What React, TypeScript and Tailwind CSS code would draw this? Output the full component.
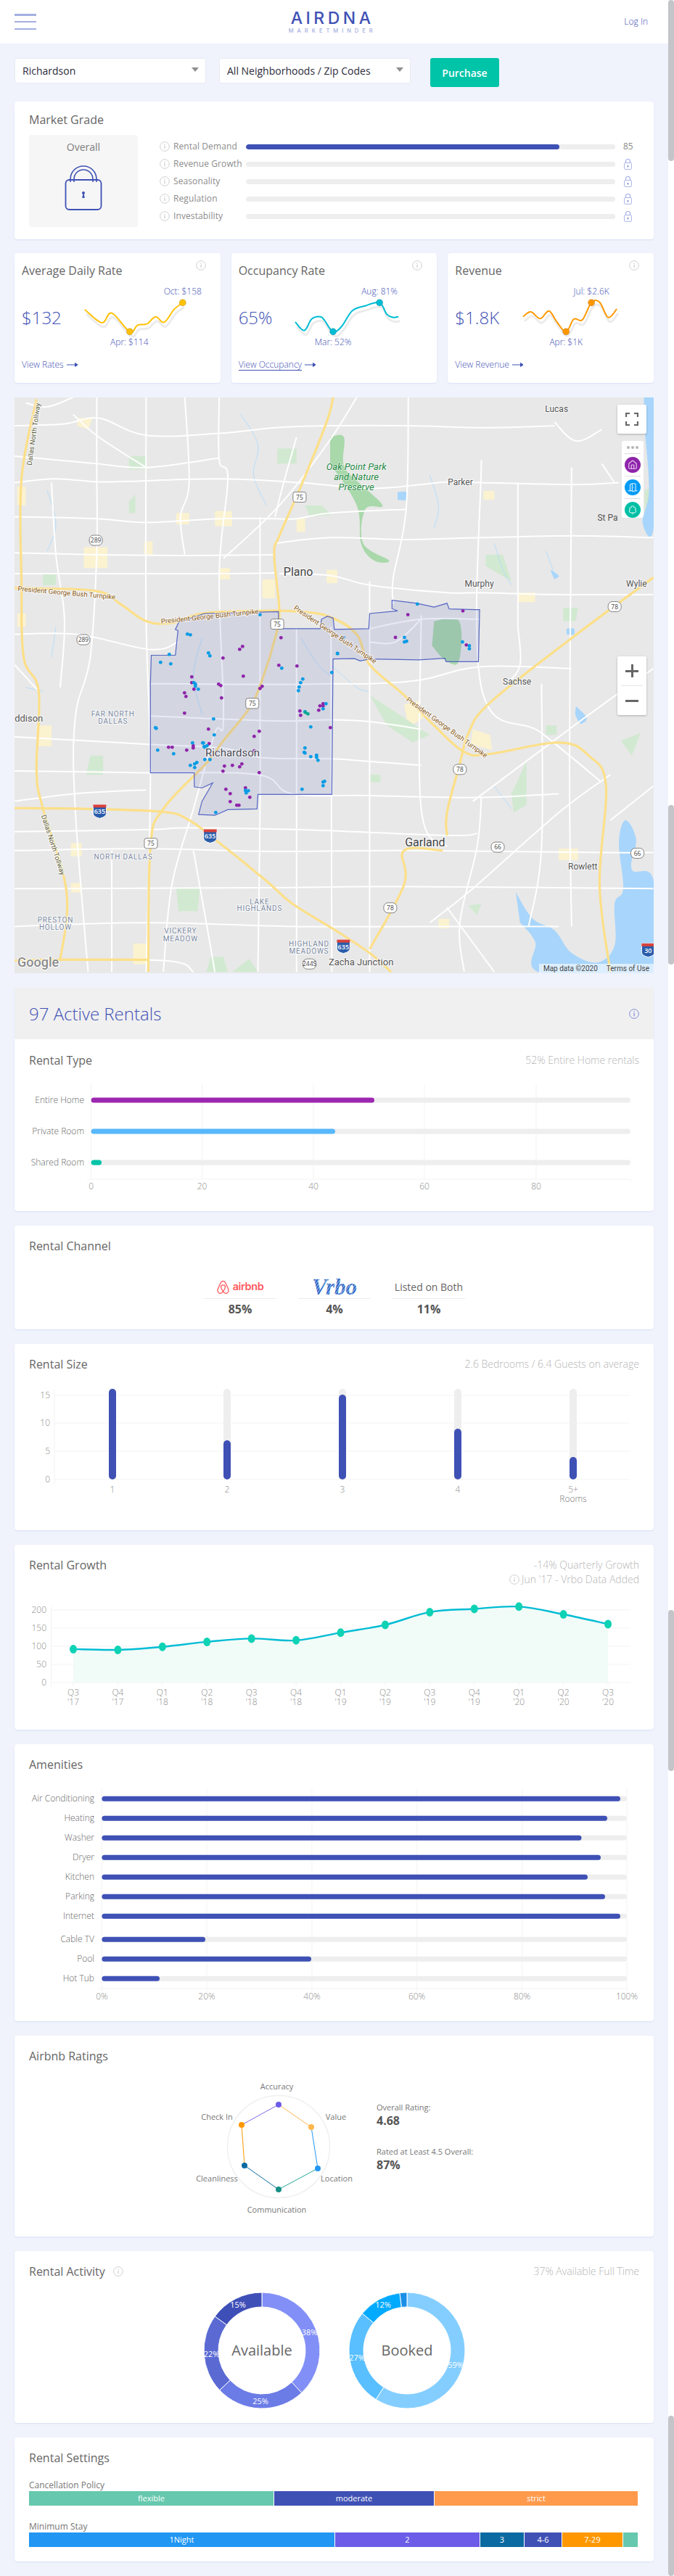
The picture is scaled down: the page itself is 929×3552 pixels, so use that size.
import React from "react";
import { House, DoorOpen, TreeDeciduous } from "lucide-react";

type P = [number, number];

// Smooth path through points (Catmull-Rom → Bezier)
function smooth(p: P[], t = 0.18): string {
  let d = `M${p[0][0]} ${p[0][1]}`;
  for (let i = 0; i < p.length - 1; i++) {
    const a = p[Math.max(i - 1, 0)], b = p[i], c = p[i + 1], e = p[Math.min(i + 2, p.length - 1)];
    d += ` C${b[0] + (c[0] - a[0]) * t} ${b[1] + (c[1] - a[1]) * t} ${c[0] - (e[0] - b[0]) * t} ${c[1] - (e[1] - b[1]) * t} ${c[0]} ${c[1]}`;
  }
  return d;
}

const Info = ({ color = "#cfcfcf", size = 14 }: { color?: string; size?: number }) => (
  <svg width={size} height={size} viewBox="0 0 14 14" className="shrink-0">
    <circle cx="7" cy="7" r="6.3" fill="none" stroke={color} strokeWidth="1" />
    <rect x="6.4" y="6" width="1.3" height="4.2" fill={color} />
    <rect x="6.4" y="3.7" width="1.3" height="1.4" fill={color} />
  </svg>
);

const SmallLock = () => (
  <svg width="11" height="15" viewBox="0 0 11 15" className="ml-[1px]">
    <path d="M2.5 6V3.5a3 3 0 0 1 6 0V6" fill="none" stroke="#a9b3e6" strokeWidth="1.2" />
    <rect x="0.6" y="5.6" width="9.8" height="8.8" rx="1" fill="none" stroke="#a9b3e6" strokeWidth="1" />
    <rect x="5" y="9" width="1" height="2.5" fill="#3f51b5" />
  </svg>
);

const gradeRows = [
  { label: "Rental Demand", value: true },
  { label: "Revenue Growth" },
  { label: "Seasonality" },
  { label: "Regulation" },
  { label: "Investability" },
];

function MarketGrade() {
  return (
    <section className="mt-5 h-[190px] rounded-[4px] bg-white px-5 pt-[13px] shadow-[0_1px_2px_#d9dff5]">
      <h2 className="text-[16px] leading-6 text-[#666666]">Market Grade</h2>
      <div className="mt-[9px] flex">
        <div className="flex h-[127px] w-[150px] flex-col items-center rounded-[4px] bg-[#f6f6f6] pt-[7px]">
          <span className="text-[14px] leading-5 text-[#7d7d7d]">Overall</span>
          <svg width="52" height="66" viewBox="0 0 52 66" className="mt-[12px]">
            <path d="M8 26V22a18 18 0 0 1 36 0v4" fill="none" stroke="#3f51b5" strokeWidth="1.6" />
            <path d="M13 26V22a13 13 0 0 1 26 0v4" fill="none" stroke="#3f51b5" strokeWidth="1.6" />
            <rect x="1.5" y="23" width="49" height="41" rx="5" fill="none" stroke="#3f51b5" strokeWidth="1.8" />
            <circle cx="26" cy="41" r="2" fill="#3f51b5" />
            <path d="M25.4 42h1.2l1.2 6h-3.6z" fill="#3f51b5" />
          </svg>
        </div>
        <div className="ml-[30px] mt-[4px] flex flex-col">
          {gradeRows.map((r) => (
            <div key={r.label} className="flex h-6 items-center">
              <Info />
              <span className="ml-[5px] w-[100px] text-[12px] tracking-[0.1px] text-[#8c8c8c]">{r.label}</span>
              <div className="h-[7px] w-[509px] overflow-hidden rounded-full bg-[#eeeeee]">
                {r.value && <div className="h-full w-[432px] rounded-full bg-[#3f51b5]" />}
              </div>
              <div className="ml-[11px] w-[20px] text-[12px] text-[#888888]">{r.value ? "85" : <SmallLock />}</div>
            </div>
          ))}
        </div>
      </div>
    </section>
  );
}

type Spark = {
  title: string; value: string; color: string; cardX: number; link: string; underline?: boolean;
  pts: P[]; dots: P[]; hi: [string, number]; lo: [string, number];
};
const sparks: Spark[] = [
  {
    title: "Average Daily Rate", value: "$132", color: "#ffc107", cardX: 20, link: "View Rates",
    pts: [[197, 290], [237, 345], [260, 305], [302, 382], [320, 355], [342, 350], [362, 320], [382, 343], [405, 290], [425, 262]],
    dots: [[302, 382], [425, 262]], hi: ["Oct: $158", 425], lo: ["Apr: $114", 301],
  },
  {
    title: "Occupancy Rate", value: "65%", color: "#00bcd4", cardX: 319, link: "View Occupancy", underline: true,
    pts: [[687, 342], [708, 377], [725, 330], [745, 320], [755, 335], [775, 382], [795, 360], [820, 295], [850, 275], [883, 262], [900, 310], [915, 323], [927, 320]],
    dots: [[775, 382], [883, 262]], hi: ["Aug: 81%", 883], lo: ["Mar: 52%", 775],
  },
  {
    title: "Revenue", value: "$1.8K", color: "#ff9800", cardX: 617, link: "View Revenue",
    pts: [[1217, 320], [1235, 300], [1257, 328], [1277, 296], [1295, 340], [1317, 382], [1335, 330], [1355, 333], [1376, 262], [1395, 260], [1415, 323], [1435, 288]],
    dots: [[1317, 382], [1376, 262]], hi: ["Jul: $2.6K", 1376], lo: ["Apr: $1K", 1317],
  },
];

function SparkCard({ s }: { s: Spark }) {
  const X = (z: number) => z / 1.688 - s.cardX - 80;
  const Y = (z: number) => z / 3 + 330 - 395;
  const pts = s.pts.map(([x, y]) => [X(x), Y(y)] as P);
  return (
    <section className="relative h-[179px] rounded-[4px] bg-white px-[10px] pt-[12px] shadow-[0_1px_2px_#d9dff5]">
      <h3 className="text-[16px] leading-6 text-[#666666]">{s.title}</h3>
      <div className="absolute right-[20px] top-[10px]"><Info /></div>
      <div className="mt-[10px] flex h-[85px] items-center">
        <div className="w-[70px] text-[24px] font-light text-[#3f51b5]">{s.value}</div>
        <svg width="185" height="85" className="overflow-visible">
          <path d={smooth(pts)} fill="none" stroke="#000" strokeOpacity="0.08" strokeWidth="3" transform="translate(2 6)" />
          <path d={smooth(pts)} fill="none" stroke={s.color} strokeWidth="2" />
          {s.dots.map(([x, y]) => (
            <circle key={x} cx={X(x)} cy={Y(y)} r="4.6" fill={s.color} stroke="#000" strokeOpacity="0.15" strokeWidth="1" />
          ))}
          <text x={X(s.hi[1])} y={Y(215) + 4} textAnchor="middle" fontSize="12" fill="#3f51b5" fontWeight="300">{s.hi[0]}</text>
          <text x={X(s.lo[1])} y={Y(425) + 4} textAnchor="middle" fontSize="12" fill="#3f51b5" fontWeight="300">{s.lo[0]}</text>
        </svg>
      </div>
      <div className="mt-[15px] flex h-4 items-center text-[12px] font-light text-[#3f51b5]">
        <span className={s.underline ? "border-b border-[#3f51b5] leading-[15px]" : ""}>{s.link}</span>
        <svg width="16" height="8" viewBox="0 0 16 8" className="ml-[4px]">
          <path d="M0 4h14M11.5 1.5 15 4l-3.5 2.5z" stroke="#3f51b5" strokeWidth="1" fill="#3f51b5" />
        </svg>
      </div>
    </section>
  );
}

/* ---------- MAP ---------- */
const mx = (z: number) => z / 1.688 - 20;
const my = (z: number) => z / 1.912 - 8;
const line = (a: number[]) => {
  let s = "";
  for (let i = 0; i < a.length; i += 2) s += `${i ? "L" : "M"}${mx(a[i]).toFixed(1)} ${my(a[i + 1]).toFixed(1)} `;
  return s;
};
const curve = (a: number[]) => {
  const p: P[] = [];
  for (let i = 0; i < a.length; i += 2) p.push([mx(a[i]), my(a[i + 1])]);
  return smooth(p);
};

const whiteRoads: number[][] = [
  [34, 90, 150, 85, 230, 70, 340, 115, 510, 110, 640, 95, 760, 90, 950, 90, 1130, 95, 1290, 90],
  [34, 240, 130, 230, 230, 238, 340, 235, 520, 230, 700, 240, 870, 255, 1040, 238, 1120, 240, 1330, 245, 1440, 240],
  [34, 330, 225, 335, 340, 345, 510, 335, 640, 335, 690, 335, 770, 320, 945, 310],
  [640, 400, 770, 385, 945, 390, 1120, 385, 1330, 380, 1520, 385],
  [34, 425, 225, 430, 430, 432, 640, 430],
  [34, 480, 340, 480, 510, 480, 640, 478],
  [650, 480, 770, 485, 860, 510, 1040, 530, 1120, 530, 1290, 535, 1520, 535],
  [34, 640, 180, 640, 350, 680, 415, 660],
  [350, 770, 640, 772, 770, 770, 860, 770, 980, 760, 1120, 725, 1330, 730],
  [350, 855, 640, 868, 770, 865, 860, 870, 980, 890],
  [34, 910, 350, 930, 520, 940, 610, 965, 770, 968, 860, 975, 980, 985],
  [34, 1000, 350, 1005, 600, 1010, 680, 1060, 860, 1065, 1110, 1070, 1300, 1060],
  [34, 1160, 340, 1155, 440, 1150, 700, 1155, 1040, 1170, 1110, 1165],
  [34, 1210, 340, 1205, 620, 1212, 940, 1210, 1400, 1215, 1520, 1215],
  [34, 1310, 160, 1310, 620, 1308, 940, 1305, 1520, 1310],
  [34, 1410, 340, 1400, 680, 1410, 1000, 1410, 1300, 1410],
  [34, 1500, 380, 1500, 450, 1530],
  [860, 625, 980, 600, 1116, 600],
  [860, 660, 920, 660, 980, 600],
  [225, 15, 225, 200, 225, 430, 210, 700, 175, 860, 175, 1100, 205, 1530],
  [340, 15, 340, 600, 350, 1000, 340, 1530],
  [510, 15, 510, 180, 530, 230, 510, 480, 520, 860, 500, 900, 450, 1100, 400, 1300, 380, 1530],
  [605, 330, 605, 780, 605, 1100, 600, 1530],
  [690, 625, 690, 1530],
  [770, 620, 772, 1530],
  [860, 500, 860, 1530],
  [950, 15, 945, 310, 915, 490, 915, 560],
  [980, 590, 980, 1100, 1040, 1200],
  [1120, 180, 1120, 780, 1260, 900, 1400, 1030],
  [1205, 240, 1205, 620],
  [1330, 200, 1325, 1000, 1330, 1410],
  [1520, 730, 1360, 860, 1100, 1080],
  [1000, 1400, 1100, 1310, 1300, 1110, 1420, 1010],
  [1040, 1360, 1150, 1530],
  [830, 15, 760, 140, 650, 300, 520, 440],
  [34, 720, 90, 790],
  [170, 60, 230, 120, 340, 200],
  [1520, 1040, 1420, 1130],
  [1290, 80, 1340, 130, 1400, 100],
  [1400, 190, 1430, 240],
  [34, 170, 130, 180, 225, 190, 340, 200, 510, 175],
  [430, 15, 440, 240, 420, 330, 430, 430],
  [120, 240, 130, 430, 150, 600, 140, 780],
  [60, 30, 110, 40, 170, 15],
  [1120, 1070, 1110, 1200, 1070, 1400, 1080, 1530],
  [1260, 770, 1260, 1200, 1230, 1410],
  [690, 120, 660, 240, 640, 330],
  [34, 1080, 175, 1060, 340, 1050],
  [260, 1210, 260, 1530],
  [450, 1210, 480, 1400, 500, 1530],
  [1205, 620, 1210, 720, 1180, 770],
];
const yellowRoads: number[][] = [
  [775, 15, 760, 80, 700, 250, 650, 380, 638, 430, 650, 580, 640, 650, 610, 760, 580, 835, 520, 920, 480, 980, 380, 1100, 350, 1200, 345, 1530],
  [85, 20, 50, 230, 50, 500, 55, 700, 90, 790, 85, 1000, 100, 1100, 155, 1320, 140, 1500],
  [34, 518, 220, 525, 280, 560, 340, 605, 400, 610, 470, 585, 600, 578, 700, 580, 770, 595, 830, 640, 860, 720, 940, 800, 1010, 880, 1080, 950, 1140, 955, 1300, 925, 1370, 960, 1410, 1040, 1395, 1300, 1420, 1530],
  [34, 1098, 200, 1100, 380, 1108, 440, 1130, 500, 1180, 620, 1290, 680, 1350, 780, 1420, 860, 1480, 910, 1530],
  [1520, 490, 1330, 650, 1140, 820, 1090, 900, 1070, 980, 1040, 1110, 1040, 1170],
  [1030, 1210, 940, 1210, 940, 1300, 860, 1470],
  [34, 1500, 140, 1498, 345, 1498],
];
const parks: number[][] = [
  [768, 120, 800, 120, 800, 195, 835, 240, 890, 300, 850, 310, 845, 400, 905, 445, 870, 445, 840, 400, 830, 300, 768, 190],
  [1010, 605, 1068, 605, 1068, 710, 1038, 710, 1005, 670],
];
const greens: number[][] = [
  [300, 170, 340, 170, 340, 205, 300, 205],
  [645, 150, 690, 150, 690, 190, 645, 190],
  [860, 800, 900, 830, 1000, 905, 960, 925, 900, 880],
  [1190, 1060, 1225, 975, 1225, 1090, 1195, 1110],
  [1445, 920, 1490, 900, 1470, 960],
  [1120, 1350, 1110, 1380, 1090, 1355],
  [410, 1310, 465, 1310, 460, 1370, 415, 1370],
  [540, 1530, 580, 1495, 600, 1530],
  [1310, 570, 1345, 570, 1340, 605, 1310, 605],
  [1130, 430, 1170, 430, 1190, 500, 1130, 460],
  [710, 300, 750, 300, 770, 325, 720, 330],
  [100, 480, 130, 480, 130, 510, 100, 510],
  [1270, 880, 1295, 880, 1295, 905, 1270, 905],
  [860, 1010, 885, 1010, 885, 1030, 860, 1030],
  [210, 960, 240, 960, 240, 1010, 200, 1010],
  [490, 1490, 520, 1490, 530, 1530, 480, 1530],
  [300, 290, 315, 270, 315, 320, 300, 320],
  [1500, 260, 1521, 250, 1521, 330, 1500, 320],
];
const yellows: number[][] = [
  [500, 315, 540, 315, 540, 355, 500, 355],
  [410, 320, 440, 320, 440, 350, 410, 350],
  [195, 410, 250, 410, 250, 465, 195, 465],
  [335, 395, 355, 395, 355, 430, 335, 430],
  [610, 495, 640, 495, 640, 545, 610, 545],
  [690, 335, 710, 335, 710, 370, 690, 370],
  [760, 470, 785, 470, 785, 505, 760, 505],
  [1205, 530, 1245, 530, 1245, 555, 1205, 555],
  [1125, 262, 1150, 262, 1150, 285, 1125, 285],
  [940, 825, 975, 815, 985, 860, 950, 885],
  [1100, 890, 1140, 905, 1145, 945, 1095, 930],
  [165, 1190, 190, 1190, 190, 1225, 165, 1225],
  [310, 1455, 345, 1455, 345, 1510, 310, 1510],
  [510, 465, 535, 465, 535, 495, 510, 495],
  [40, 250, 60, 250, 60, 300, 40, 300],
  [40, 585, 60, 585, 60, 620, 40, 620],
  [85, 880, 120, 880, 120, 935, 85, 935],
  [1300, 1205, 1345, 1205, 1345, 1235, 1300, 1235],
  [1020, 1390, 1045, 1390, 1045, 1415, 1020, 1415],
  [165, 1295, 190, 1295, 190, 1320, 165, 1320],
  [180, 70, 215, 70, 205, 100, 180, 90],
];
const waterPolys: number[][] = [
  [1200, 1320, 1240, 1390, 1290, 1420, 1330, 1480, 1390, 1505, 1430, 1460, 1430, 1350, 1450, 1310, 1440, 1190, 1455, 1130, 1480, 1180, 1470, 1260, 1521, 1290, 1521, 1533, 1260, 1533, 1245, 1450, 1210, 1400],
  [1498, 15, 1521, 15, 1521, 355, 1495, 345, 1510, 260, 1500, 100],
  [1340, 830, 1365, 860, 1350, 875, 1338, 850],
  [1280, 470, 1300, 485, 1290, 495],
  [1318, 625, 1335, 625, 1335, 640, 1318, 640],
  [925, 265, 945, 265, 945, 285, 925, 285],
];
const streams: number[][] = [
  [560, 60, 600, 140, 590, 220, 620, 300],
  [110, 260, 130, 350, 110, 420],
  [1000, 220, 1020, 300, 1010, 360],
  [1150, 400, 1170, 470, 1190, 510],
  [1270, 420, 1290, 480],
  [1150, 1040, 1190, 1100],
  [770, 720, 830, 780, 860, 790],
  [470, 650, 450, 750, 470, 850],
  [700, 650, 740, 720, 770, 750],
  [130, 620, 120, 700],
  [60, 780, 100, 790],
];

const polyMain = [352, 695, 408, 695, 414, 630, 408, 627, 416, 608, 475, 585, 648, 580, 648, 625, 745, 625, 748, 600, 762, 592, 775, 597, 778, 627, 858, 625, 860, 585, 925, 578, 912, 572, 912, 550, 970, 558, 1010, 568, 1040, 558, 1045, 573, 1107, 575, 1116, 575, 1113, 712, 1038, 712, 1035, 703, 975, 707, 860, 705, 838, 710, 825, 704, 775, 705, 772, 1062, 600, 1062, 598, 1100, 530, 1102, 500, 1117, 462, 1115, 470, 1080, 495, 1032, 470, 1045, 452, 1042, 452, 1005, 350, 1005, 350, 770];

const cp = (a: number) => 190 + a / 3 - 20;
const cq = (a: number) => 860 + a / 3 - 548;
const purple: P[] = [[592, 58], [433, 94], [421, 106], [352, 142], [583, 172], [658, 175], [436, 217], [223, 220], [223, 244], [334, 250], [343, 256], [514, 259], [505, 268], [232, 271], [193, 286], [199, 301], [346, 307], [193, 370], [670, 361], [673, 379], [748, 358], [753, 340], [766, 331], [766, 340], [481, 319], [475, 328], [490, 325], [469, 340], [481, 337], [292, 436], [502, 445], [481, 466], [796, 430], [295, 496], [229, 505], [229, 514], [127, 511], [142, 511], [202, 523], [481, 526], [358, 589], [391, 586], [430, 580], [421, 592], [352, 610], [502, 616], [364, 685], [445, 679], [382, 703], [463, 718], [382, 736], [409, 751], [418, 751]];
const blue: P[] = [[205, 43], [217, 46], [292, 121], [298, 133], [130, 127], [94, 160], [136, 166], [595, 184], [826, 124], [850, 58], [802, 202], [682, 229], [673, 244], [667, 262], [664, 277], [238, 250], [238, 259], [232, 244], [250, 271], [778, 331], [766, 352], [691, 364], [313, 394], [73, 430], [76, 433], [715, 427], [316, 460], [226, 493], [268, 493], [271, 493], [274, 508], [277, 511], [286, 505], [82, 523], [148, 538], [691, 514], [688, 532], [691, 535], [715, 550], [739, 544], [739, 553], [745, 565], [277, 562], [298, 562], [244, 574], [235, 580], [217, 586], [235, 595], [772, 652], [766, 655], [766, 670], [679, 685], [445, 690], [457, 691], [448, 700], [322, 781]];
const green: P[] = [[693, 367], [703, 373]];
const purpleZ: P[] = [[949, 588], [1077, 578], [920, 648], [1085, 668]];
const blueZ: P[] = [[971, 560], [799, 649], [785, 690], [941, 648], [941, 660], [946, 658], [1076, 660], [1092, 670], [1092, 678], [605, 588]];

type L = [string, number, number, number, string?, number?];
const mapLabels: L[] = [
  ["Plano", 694, 475, 16, "#444"],
  ["Richardson", 541, 951, 15, "#4a4a55"],
  ["Garland", 989, 1188, 16, "#444"],
  ["Murphy", 1115, 507, 12, "#555"],
  ["Parker", 1071, 239, 12, "#555"],
  ["Lucas", 1295, 46, 12, "#555"],
  ["Wylie", 1481, 507, 12, "#555"],
  ["Sachse", 1203, 765, 12, "#555"],
  ["Rowlett", 1356, 1251, 12, "#555"],
  ["Zacha Junction", 840, 1503, 13, "#555"],
  ["FAR NORTH", 263, 849, 10, "#7b8aa3"],
  ["DALLAS", 263, 868, 10, "#7b8aa3"],
  ["NORTH DALLAS", 287, 1227, 10, "#7b8aa3"],
  ["LAKE", 604, 1344, 10, "#7b8aa3"],
  ["HIGHLANDS", 604, 1363, 10, "#7b8aa3"],
  ["PRESTON", 129, 1393, 10, "#7b8aa3"],
  ["HOLLOW", 129, 1411, 10, "#7b8aa3"],
  ["VICKERY", 420, 1422, 10, "#7b8aa3"],
  ["MEADOW", 420, 1442, 10, "#7b8aa3"],
  ["HIGHLAND", 719, 1455, 10, "#7b8aa3"],
  ["MEADOWS", 719, 1474, 10, "#7b8aa3"],
  ["President George Bush Turnpike", 155, 530, 9.5, "#8a5a14", 5],
  ["President George Bush Turnpike", 488, 592, 9.5, "#8a5a14", -6],
  ["President George Bush Turnpike", 780, 640, 9.5, "#8a5a14", 34],
  ["President George Bush Turnpike", 1040, 885, 9.5, "#8a5a14", 36],
  ["Dallas North Tollway", 78, 112, 9.5, "#5c5c3c", -82],
  ["Dallas North Tollway", 124, 1195, 9.5, "#5c5c3c", 72],
];

const Shield = ({ z, label, kind }: { z: P; label: string; kind: "us" | "st" | "i" }) => {
  const x = mx(z[0]), y = my(z[1]);
  if (kind === "i")
    return (
      <g transform={`translate(${x} ${y})`}>
        <path d="M-9 -9h18v12q0 5 -9 7q-9 -2 -9 -7z" fill="#2a5caa" stroke="#fff" strokeWidth="1" />
        <path d="M-9 -9h18v4h-18z" fill="#d8423b" />
        <text y="4" textAnchor="middle" fontSize="9" fill="#fff" fontWeight="600">{label}</text>
      </g>
    );
  return (
    <g transform={`translate(${x} ${y})`}>
      <rect x="-9" y="-7" width="18" height="14" rx={kind === "us" ? 3 : 6} fill="#fff" stroke="#666" strokeWidth="0.8" />
      <text y="3.2" textAnchor="middle" fontSize="8.5" fill="#444">{label}</text>
    </g>
  );
};

function MapPanel() {
  return (
    <section className="relative mt-5 h-[794px] overflow-hidden bg-[#e8e8e8]">
      <svg width="881" height="794" className="block">
        {yellows.map((g, i) => <path key={i} d={line(g) + "Z"} fill="#fbf2d0" />)}
        {greens.map((g, i) => <path key={i} d={line(g) + "Z"} fill="#d2e9d1" />)}
        {parks.map((g, i) => <path key={i} d={curve(g) + "Z"} fill="#a9d8ab" />)}
        {streams.map((g, i) => <path key={i} d={curve(g)} fill="none" stroke="#aadaff" strokeWidth="0.8" />)}
        {waterPolys.map((g, i) => <path key={i} d={curve(g) + "Z"} fill="#a8d5fb" />)}
        {whiteRoads.map((g, i) => <path key={i} d={curve(g)} fill="none" stroke="#fff" strokeWidth="2" />)}
        {yellowRoads.map((g, i) => (
          <path key={i} d={curve(g)} fill="none" stroke="#fcdf88" strokeWidth="3.2" />
        ))}
        <path d={line(polyMain) + "Z"} fill="#3f51b5" fillOpacity="0.12" stroke="#5566c4" strokeWidth="1.2" />
        {purple.map(([a, b], i) => <circle key={i} cx={cp(a)} cy={cq(b)} r="2.4" fill="#8e24aa" />)}
        {blue.map(([a, b], i) => <circle key={i} cx={cp(a)} cy={cq(b)} r="2.4" fill="#039be5" />)}
        {green.map(([a, b], i) => <circle key={i} cx={cp(a)} cy={cq(b)} r="2.4" fill="#00a98f" />)}
        {purpleZ.map(([a, b], i) => <circle key={i} cx={mx(a)} cy={my(b)} r="2.4" fill="#8e24aa" />)}
        {blueZ.map(([a, b], i) => <circle key={i} cx={mx(a)} cy={my(b)} r="2.4" fill="#039be5" />)}
        <Shield z={[697, 278]} label="75" kind="us" />
        <Shield z={[645, 613]} label="75" kind="us" />
        <Shield z={[587, 822]} label="75" kind="us" />
        <Shield z={[351, 1191]} label="75" kind="us" />
        <Shield z={[223, 392]} label="289" kind="st" />
        <Shield z={[194, 654]} label="289" kind="st" />
        <Shield z={[1430, 567]} label="78" kind="st" />
        <Shield z={[1070, 996]} label="78" kind="st" />
        <Shield z={[908, 1361]} label="78" kind="st" />
        <Shield z={[1158, 1201]} label="66" kind="st" />
        <Shield z={[1483, 1217]} label="66" kind="st" />
        <Shield z={[720, 1509]} label="244S" kind="st" />
        <Shield z={[232, 1106]} label="635" kind="i" />
        <Shield z={[489, 1171]} label="635" kind="i" />
        <Shield z={[799, 1462]} label="635" kind="i" />
        <Shield z={[1508, 1472]} label="30" kind="i" />
        {mapLabels.map(([t, zx, zy, fs, c, rot], i) => (
          <text
            key={i}
            x={mx(zx)}
            y={my(zy) + fs * 0.36}
            textAnchor="middle"
            fontSize={fs}
            fill={c}
            stroke="#fff"
            strokeOpacity="0.75"
            strokeWidth="2"
            paintOrder="stroke"
            letterSpacing={t === t.toUpperCase() ? 0.8 : 0}
            fontFamily="Roboto, sans-serif"
            transform={rot ? `rotate(${rot} ${mx(zx)} ${my(zy)})` : undefined}
          >
            {t}
          </text>
        ))}
        {[["Oak Point Park", 198], ["and Nature", 225], ["Preserve", 252]].map(([t, y]) => (
          <text key={t as string} x={mx(829)} y={my(y as number) + 4.5} textAnchor="middle" fontSize="13" fontStyle="italic" fill="#268a45" stroke="#fff" strokeOpacity="0.6" strokeWidth="1.5" paintOrder="stroke" fontFamily="Roboto, sans-serif">{t}</text>
        ))}
        <text x={mx(34)} y={my(861) + 5} fontSize="13" fill="#555" fontFamily="Roboto, sans-serif" stroke="#fff" strokeOpacity="0.7" strokeWidth="2" paintOrder="stroke">ddison</text>
        <text x={mx(1390)} y={my(333) + 4} fontSize="12" fill="#555" fontFamily="Roboto, sans-serif">St Pa</text>
        <text x="4" y="785" fontSize="18" fontWeight="500" fill="#8a8a8a" stroke="#fff" strokeWidth="2" paintOrder="stroke" fontFamily="Roboto, sans-serif">Google</text>
      </svg>
      <div className="absolute bottom-0 right-0 flex h-[13px] items-center gap-3 bg-white/60 px-[6px] font-['Roboto',sans-serif] text-[10px] text-[#444]">
        <span>Map data ©2020</span>
        <span>Terms of Use</span>
      </div>
      <button className="absolute left-[831px] top-[10px] flex h-10 w-10 items-center justify-center rounded-[2px] bg-white shadow-[0_1px_3px_rgba(0,0,0,0.25)]">
        <svg width="18" height="18" viewBox="0 0 18 18">
          <path d="M1 6V1h5M12 1h5v5M17 12v5h-5M6 17H1v-5" fill="none" stroke="#666" strokeWidth="2.2" />
        </svg>
      </button>
      <div className="absolute left-[837px] top-[60px] flex h-[106px] w-[30px] flex-col items-center rounded-[3px] bg-white">
        <div className="flex h-[17px] items-center gap-[2px] pt-[1px]">
          <i className="size-[4px] rounded-full bg-[#b5b5b5]" /><i className="size-[4px] rounded-full bg-[#b5b5b5]" /><i className="size-[4px] rounded-full bg-[#b5b5b5]" />
        </div>
        <div className="h-px w-[22px] bg-[#dddddd]" />
        <div className="mt-[4px] flex size-[22px] items-center justify-center rounded-full bg-[#8e24aa] text-[#e7c6ef]"><House size={14} /></div>
        <div className="mt-[4px] h-px w-[22px] bg-[#dddddd]" />
        <div className="mt-[4px] flex size-[22px] items-center justify-center rounded-full bg-[#039bf5] text-[#c8e8ff]"><DoorOpen size={14} /></div>
        <div className="mt-[4px] h-px w-[22px] bg-[#dddddd]" />
        <div className="mt-[4px] flex size-[22px] items-center justify-center rounded-full bg-[#00bfa5] text-[#c8f3ec]"><TreeDeciduous size={14} /></div>
      </div>
      <div className="absolute left-[831px] top-[357px] flex h-[81px] w-10 flex-col items-center rounded-[2px] bg-white shadow-[0_1px_3px_rgba(0,0,0,0.25)]">
        <div className="relative h-10 w-full">
          <i className="absolute left-[11px] top-[19px] h-[3px] w-[18px] bg-[#666666]" />
          <i className="absolute left-[18.5px] top-[11px] h-[18px] w-[3px] bg-[#666666]" />
        </div>
        <div className="h-px w-[30px] bg-[#e6e6e6]" />
        <div className="relative h-10 w-full">
          <i className="absolute left-[11px] top-[19px] h-[3px] w-[18px] bg-[#666666]" />
        </div>
      </div>
    </section>
  );
}

/* ---------- CHART SECTIONS ---------- */
const cardCls = "mt-5 rounded-[4px] bg-white shadow-[0_1px_2px_#d9dff5]";
const Title = ({ children }: { children: React.ReactNode }) => (
  <h2 className="text-[16px] leading-6 text-[#666666]">{children}</h2>
);
const Note = ({ children }: { children: React.ReactNode }) => (
  <span className="text-[14px] font-light leading-5 text-[#b5b5b5]">{children}</span>
);
const G = "#f3f3f5";
const TICK = "#8c8c8c";

function RentalType() {
  const rows: [string, number, number, string][] = [
    ["Entire Home", 27, 390.4, "#9c27b0"],
    ["Private Room", 70, 336.4, "#58b8fb"],
    ["Shared Room", 113, 14.4, "#00c4a7"],
  ];
  return (
    <section className="mt-5 h-[308px] overflow-hidden rounded-[4px] bg-white shadow-[0_1px_2px_#d9dff5]">
      <div className="flex h-[71px] items-center justify-between bg-[#f0f0f0] px-5">
        <span className="text-[24px] font-light text-[#3f51b5]">97 Active Rentals</span>
        <Info color="#7f8ed6" />
      </div>
      <div className="flex items-center justify-between px-5 pt-[17px]">
        <Title>Rental Type</Title>
        <Note>52% Entire Home rentals</Note>
      </div>
      <svg width="881" height="160" className="mt-[16px] block">
        {[105.6, 258.5, 412, 565, 719].map((x) => <line key={x} x1={x} x2={x} y1="5" y2="136" stroke={G} />)}
        <line x1="100" x2="849" y1="136" y2="136" stroke={G} />
        <line x1="849" x2="849" y1="136" y2="140" stroke={G} />
        {rows.map(([l, y, w, c]) => (
          <g key={l}>
            <text x="96" y={y + 4} textAnchor="end" fontSize="12" fontWeight="300" fill="#666">{l}</text>
            <rect x="105.6" y={y - 3.5} width="743.4" height="7" rx="3.5" fill="#eeeeee" />
            <rect x="105.6" y={y - 3.5} width={w} height="7" rx="3.5" fill={c} />
          </g>
        ))}
        {[["0", 105.6], ["20", 258.5], ["40", 412], ["60", 565], ["80", 719]].map(([t, x]) => (
          <text key={t as string} x={x as number} y="150" textAnchor="middle" fontSize="12" fontWeight="300" fill={TICK}>{t}</text>
        ))}
      </svg>
    </section>
  );
}

const Belo = () => (
  <svg width="17" height="20" viewBox="0 0 20 23" fill="none" stroke="#ff5a5f" strokeWidth="1.5">
    <path d="M10 1.500C8 1.500 7 2.500 6 4.500L1.700 14c-1.600 3.500.8 7.500 3.800 7.500 2 0 3.500-1.500 4.500-3 1 1.500 2.500 3 4.500 3 3 0 5.400-4 3.800-7.500L14 4.500c-1-2-2-3-4-3z" />
    <path d="M10 18.500c-2-3-3.500-5.500-3.500-7.800 0-2 1.500-3 3.500-3s3.500 1 3.500 3c0 2.300-1.500 4.800-3.500 7.800z" />
  </svg>
);

function Channel() {
  return (
    <section className={`${cardCls} h-[143px] px-5 pt-[16px]`}>
      <Title>Rental Channel</Title>
      <div className="mt-[32px] flex justify-center gap-[30px] pl-[1px]">
        <div className="w-[100px] text-center">
          <div className="flex h-[29px] items-center justify-center gap-[5px] border-b border-[#ececec] pb-[3px]">
            <Belo />
            <span className="font-['Inter',sans-serif] text-[14.500px] font-semibold leading-none tracking-[-0.4px] text-[#ff5a5f]">airbnb</span>
          </div>
          <div className="text-[16px] font-bold leading-7 text-[#555555]">85%</div>
        </div>
        <div className="w-[100px] text-center">
          <div className="flex h-[29px] items-center justify-center border-b border-[#ececec]">
            <svg width="70" height="28">
              <defs>
                <pattern id="vrboStripe" width="3" height="3" patternUnits="userSpaceOnUse" patternTransform="rotate(35)">
                  <rect width="3" height="3" fill="#2e62c2" />
                  <rect width="1" height="3" fill="#9cc2ee" />
                </pattern>
              </defs>
              <text x="35" y="23" textAnchor="middle" fontFamily="'Liberation Serif', serif" fontWeight="700" fontStyle="italic" fontSize="31" fill="url(#vrboStripe)">Vrbo</text>
            </svg>
          </div>
          <div className="text-[16px] font-bold leading-7 text-[#555555]">4%</div>
        </div>
        <div className="w-[100px] text-center">
          <div className="flex h-[29px] items-center justify-center border-b border-[#ececec] pb-[3px] text-[14px] text-[#666666]">Listed on Both</div>
          <div className="text-[16px] font-bold leading-7 text-[#555555]">11%</div>
        </div>
      </div>
    </section>
  );
}

function RentalSize() {
  const top = 1905;
  const bars: [string, number, number][] = [["1", 135, 1915], ["2", 293, 1986], ["3", 452, 1923], ["4", 611, 1970], ["5+", 770, 2009]];
  return (
    <section className={`${cardCls} h-[257px] pt-[16px]`}>
      <div className="flex items-center justify-between px-5">
        <Title>Rental Size</Title>
        <Note>2.6 Bedrooms / 6.4 Guests on average</Note>
      </div>
      <svg width="881" height="175" className="mt-[12px] block">
        <line x1="55" x2="55" y1={1915 - top} y2={2046 - top} stroke={G} />
        {[[1924, "15"], [1962, "10"], [2001, "5"], [2040, "0"]].map(([y, t]) => (
          <g key={t as string}>
            <line x1="55" x2="849" y1={(y as number) - top} y2={(y as number) - top} stroke={G} />
            <text x="49" y={(y as number) - top + 4} textAnchor="end" fontSize="12" fontWeight="300" fill={TICK}>{t}</text>
          </g>
        ))}
        {bars.map(([t, x, y]) => (
          <g key={t}>
            <rect x={x - 5} y={1915 - top} width="10" height={2040 - 1915} rx="5" fill="#eeeeee" />
            <rect x={x - 5} y={y - top} width="10" height={2040 - y} rx="5" fill="#3f51b5" />
            <text x={x} y={2058 - top} textAnchor="middle" fontSize="12" fontWeight="300" fill={TICK}>{t}</text>
          </g>
        ))}
        <text x="770" y={2071 - top} textAnchor="middle" fontSize="12" fontWeight="300" fill="#777">Rooms</text>
      </svg>
    </section>
  );
}

function RentalGrowth() {
  const top = 2205;
  const ys = [1260, 1263, 1251, 1231, 1218, 1225, 1194, 1163, 1112, 1099, 1090, 1121, 1160];
  const pts: P[] = ys.map((y, i) => [81 + i * 61.42, y / 2.904 + 1840 - top]);
  const labels: [string, string][] = [["Q3", "'17"], ["Q4", "'17"], ["Q1", "'18"], ["Q2", "'18"], ["Q3", "'18"], ["Q4", "'18"], ["Q1", "'19"], ["Q2", "'19"], ["Q3", "'19"], ["Q4", "'19"], ["Q1", "'20"], ["Q2", "'20"], ["Q3", "'20"]];
  const line0 = smooth(pts);
  return (
    <section className={`${cardCls} h-[255px] pt-[16px]`}>
      <div className="flex h-[42px] justify-between px-5">
        <Title>Rental Growth</Title>
        <div className="mt-[2px] flex flex-col items-end">
          <Note>-14% Quarterly Growth</Note>
          <div className="flex items-center gap-[3px]"><Info /><Note>Jun '17 - Vrbo Data Added</Note></div>
        </div>
      </div>
      <svg width="881" height="170" className="mt-[17px] block">
        <line x1="50.500" x2="50.500" y1="10" y2="121" stroke={G} />
        {[[15, "200"], [40, "150"], [65, "100"], [90, "50"], [115, "0"]].map(([y, t]) => (
          <g key={t as string}>
            <line x1="50" x2="849" y1={y as number} y2={y as number} stroke={G} />
            <text x="44" y={(y as number) + 4} textAnchor="end" fontSize="12" fontWeight="300" fill={TICK}>{t}</text>
          </g>
        ))}
        <path d={`${line0} L${pts[12][0]} 115 L${pts[0][0]} 115Z`} fill="#f1fbf8" />
        <path d={line0} fill="none" stroke="#00bcd4" strokeWidth="2.4" />
        {pts.map(([x, y], i) => (
          <g key={i}>
            <ellipse cx={x} cy={y} rx="5" ry="6" fill="#0ed2b4" />
            <line x1={x} x2={x} y1="115" y2="120" stroke={G} />
            <text x={x} y="133" textAnchor="middle" fontSize="12" fontWeight="300" fill={TICK}>{labels[i][0]}</text>
            <text x={x} y="146" textAnchor="middle" fontSize="12" fontWeight="300" fill={TICK}>{labels[i][1]}</text>
          </g>
        ))}
      </svg>
    </section>
  );
}

function Amenities() {
  const top = 2460;
  const rows: [string, number, number][] = [
    ["Air Conditioning", 2480.3, 855], ["Heating", 2507.3, 837], ["Washer", 2534.3, 801.5], ["Dryer", 2561.3, 828],
    ["Kitchen", 2588.3, 810], ["Parking", 2615.3, 834], ["Internet", 2642.3, 855], ["Cable TV", 2674.3, 283],
    ["Pool", 2701.3, 429], ["Hot Tub", 2728.3, 220],
  ];
  return (
    <section className={`${cardCls} h-[382px] pt-[16px]`}>
      <div className="px-5"><Title>Amenities</Title></div>
      <svg width="881" height="310" className="mt-[15px] block">
        {[120.4, 265, 410, 554.6, 699.6, 844].map((x) => <line key={x} x1={x} x2={x} y1="7" y2="286" stroke={G} />)}
        <line x1="115" x2="844" y1="282" y2="282" stroke={G} />
        {rows.map(([l, y, e]) => (
          <g key={l}>
            <text x="110" y={y - top + 4} textAnchor="end" fontSize="12" fontWeight="300" fill="#666">{l}</text>
            <rect x="120.4" y={y - top - 3.5} width="723.6" height="7" rx="3.5" fill="#eeeeee" />
            <rect x="120.4" y={y - top - 3.5} width={e - 140.4} height="7" rx="3.5" fill="#3f51b5" />
          </g>
        ))}
        {["0%", "20%", "40%", "60%", "80%", "100%"].map((t, i) => (
          <text key={t} x={[120.4, 265, 410, 554.6, 699.6, 844][i]} y="297" textAnchor="middle" fontSize="12" fontWeight="300" fill={TICK}>{t}</text>
        ))}
      </svg>
    </section>
  );
}

function Ratings() {
  const o = (p: P): P => [p[0] - 220, p[1] - 2865];
  const pts: [P, string][] = [
    [[384, 2902], "#6c5ce7"], [[429, 2933], "#ffb74d"], [[438, 2990], "#2196f3"],
    [[384, 3019], "#148f85"], [[337, 2986], "#0b6aa2"], [[333, 2930], "#ff9800"],
  ];
  const segs = ["#ffb74d", "#2196f3", "#26a69a", "#0b6aa2", "#ff9800", "#7e6be8"];
  const labs: [string, number, number][] = [
    ["Accuracy", 381.5, 2877], ["Value", 463, 2919], ["Location", 464, 3004],
    ["Communication", 381.5, 3047], ["Cleanliness", 299, 3004], ["Check In", 299, 2919],
  ];
  return (
    <section className={`${cardCls} h-[277px] px-5 pt-[16px]`}>
      <Title>Airbnb Ratings</Title>
      <div className="mt-[18px] flex pl-[180px]">
        <svg width="290" height="200" className="block shrink-0">
          <circle cx="164" cy="95" r="70.500" fill="none" stroke="#f0f0f0" strokeWidth="1.500" />
          {pts.map(([p], i) => {
            const a = o(p), b = o(pts[(i + 1) % 6][0]);
            return <line key={i} x1={a[0]} y1={a[1]} x2={b[0]} y2={b[1]} stroke={segs[i]} strokeWidth="1" />;
          })}
          {pts.map(([p, c], i) => <circle key={i} cx={o(p)[0]} cy={o(p)[1]} r="4" fill={c} />)}
          {labs.map(([t, x, y]) => (
            <text key={t} x={x - 220} y={y - 2865 + 4} textAnchor="middle" fontSize="11" fill="#777">{t}</text>
          ))}
        </svg>
        <div className="ml-[9px] mt-[33px] flex flex-col text-[#777777]">
          <span className="text-[11px] leading-4">Overall Rating:</span>
          <span className="text-[16px] font-bold leading-5 text-[#555555]">4.68</span>
          <span className="mt-[25px] text-[11px] leading-4">Rated at Least 4.5 Overall:</span>
          <span className="text-[16px] font-bold leading-5 text-[#555555]">87%</span>
        </div>
      </div>
    </section>
  );
}

function arc(cx: number, cy: number, R: number, r: number, a0: number, a1: number) {
  const pt = (rad: number, a: number) => `${cx + rad * Math.sin(a)} ${cy - rad * Math.cos(a)}`;
  const A0 = a0 * 2 * Math.PI, A1 = a1 * 2 * Math.PI;
  const big = a1 - a0 > 0.5 ? 1 : 0;
  return `M${pt(R, A0)} A${R} ${R} 0 ${big} 1 ${pt(R, A1)} L${pt(r, A1)} A${r} ${r} 0 ${big} 0 ${pt(r, A0)}Z`;
}

function Donut({ cx, title, segs, labels }: { cx: number; title: string; segs: [number, string][]; labels: [string, number, number][] }) {
  let acc = 0;
  return (
    <g>
      {segs.map(([v, c], i) => {
        const d = arc(cx, 85, 80, 60, acc, acc + v);
        acc += v;
        return <path key={i} d={d} fill={c} stroke="#fff" strokeWidth="1" />;
      })}
      <text x={cx} y="92" textAnchor="middle" fontSize="20" fill="#666">{title}</text>
      {labels.map(([t, x, y]) => (
        <text key={t} x={x - 20} y={y - 3156 + 4} textAnchor="middle" fontSize="11" fill="#fff">{t}</text>
      ))}
    </g>
  );
}

function Activity() {
  return (
    <section className={`${cardCls} h-[237px] pt-[16px]`}>
      <div className="flex items-center justify-between px-5">
        <div className="flex items-center gap-[11px]"><Title>Rental Activity</Title><Info /></div>
        <Note>37% Available Full Time</Note>
      </div>
      <svg width="881" height="175" className="mt-[12px] block">
        <Donut
          cx={341}
          title="Available"
          segs={[[0.38, "#828ff6"], [0.25, "#6c7ce6"], [0.22, "#5b6ad3"], [0.15, "#3f4fb8"]]}
          labels={[["38%", 426.5, 3216], ["25%", 359, 3311], ["22%", 291.5, 3246], ["15%", 328, 3178]]}
        />
        <Donut
          cx={541}
          title="Booked"
          segs={[[0.59, "#84ceff"], [0.27, "#59bfff"], [0.12, "#00aaff"], [0.02, "#1a8fe8"]]}
          labels={[["59%", 628, 3260.5], ["27%", 492, 3251], ["12%", 528, 3178]]}
        />
      </svg>
    </section>
  );
}

function Settings() {
  const seg = "flex h-full items-center justify-center text-[11px] text-white";
  return (
    <section className={`${cardCls} h-[171px] px-5 pt-[16px]`}>
      <Title>Rental Settings</Title>
      <div className="mt-[17px] text-[12px] leading-[17px] text-[#777777]">Cancellation Policy</div>
      <div className="flex h-5 w-[839px] gap-px">
        <div className={`${seg} w-[337px] bg-[#66c8ae]`}>flexible</div>
        <div className={`${seg} w-[220px] bg-[#3f51b5]`}>moderate</div>
        <div className={`${seg} w-[280px] bg-[#ff9a4d]`}>strict</div>
      </div>
      <div className="mt-[21px] text-[12px] leading-4 text-[#777777]">Minimum Stay</div>
      <div className="flex h-5 w-[839px] gap-px">
        <div className={`${seg} w-[421px] bg-[#2196f3]`}>1Night</div>
        <div className={`${seg} w-[199px] bg-[#6c5ce7]`}>2</div>
        <div className={`${seg} w-[60px] bg-[#0b6aa2]`}>3</div>
        <div className={`${seg} w-[51px] bg-[#3f51b5]`}>4-6</div>
        <div className={`${seg} w-[83px] bg-[#ff9800]`}>7-29</div>
        <div className={`${seg} w-[20px] bg-[#66c8ae]`} />
      </div>
    </section>
  );
}

const Select = ({ label }: { label: string }) => (
  <div className="flex h-[35px] w-[264px] items-center justify-between rounded-[3px] border border-[#e8ebf5] bg-white pl-[10px] pr-[9px]">
    <span className="text-[14px] font-medium text-[#2b2b3a]">{label}</span>
    <svg width="10" height="6" viewBox="0 0 10 6" className="-mt-[4px]"><path d="M0 0h10L5 6z" fill="#8f8f8f" /></svg>
  </div>
);

export default function App() {
  return (
    <div className="relative flex min-h-[3552px] w-[929px] overflow-hidden bg-white font-['Open_Sans',sans-serif]">
      <div className="w-[921px]">
        <header className="flex h-[60px] items-center justify-between bg-white pl-5 pr-[28px]">
          <div className="flex h-[22px] w-[30px] flex-col justify-between">
            <i className="h-[2.500px] bg-[#a4afe0]" /><i className="h-[2.500px] bg-[#a4afe0]" /><i className="h-[2.500px] bg-[#a4afe0]" />
          </div>
          <div className="ml-[6px] flex w-[110px] flex-col items-center">
            <span className="font-['Inter',sans-serif] text-[23px] font-medium leading-[24px] tracking-[4.5px] text-[#3f51b5]">AIRDNA</span>
            <span className="mt-[1px] whitespace-nowrap font-['Inter',sans-serif] text-[7.500px] font-medium leading-[9px] tracking-[5px] text-[#a4afe0]">MARKETMINDER</span>
          </div>
          <span className="text-[12px] font-light text-[#3f51b5]">Log In</span>
        </header>
        <main className="bg-[#f0f3fc] px-5 pb-5 pt-5">
          <div className="flex h-10 items-start">
            <Select label="Richardson" />
            <div className="ml-[18px]"><Select label="All Neighborhoods / Zip Codes" /></div>
            <button className="ml-[27px] h-10 w-[95px] rounded-[3px] bg-[#00c4a7] text-[14px] font-semibold text-white">Purchase</button>
          </div>
          <MarketGrade />
          <div className="mt-[19px] grid grid-cols-3 gap-[15px]">
            {sparks.map((s) => <SparkCard key={s.title} s={s} />)}
          </div>
          <MapPanel />
          <RentalType />
          <Channel />
          <RentalSize />
          <RentalGrowth />
          <Amenities />
          <Ratings />
          <Activity />
          <Settings />
        </main>
      </div>
      <div className="relative w-2 bg-white">
        <i className="absolute left-0 top-0 h-[222px] w-2 rounded-full bg-[#c4c5c9]" />
        <i className="absolute left-0 top-[1110px] h-[220px] w-2 rounded-full bg-[#c4c5c9]" />
        <i className="absolute left-0 top-[2220px] h-[222px] w-2 rounded-full bg-[#c4c5c9]" />
        <i className="absolute left-0 top-[3331px] h-[221px] w-2 rounded-full bg-[#c4c5c9]" />
      </div>
    </div>
  );
}
